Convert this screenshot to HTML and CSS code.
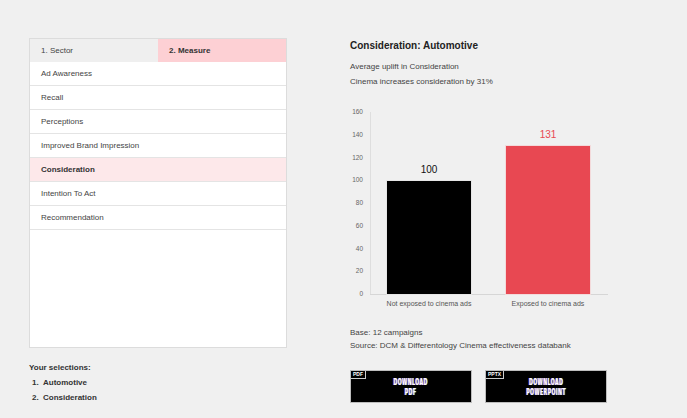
FILE: index.html
```html
<!DOCTYPE html>
<html>
<head>
  <meta charset="UTF-8">
  <title>Cinema effectiveness</title>
  <link rel="stylesheet" href="styles.css">
</head>
<body>
  <div class="page">
    <div class="left">
      <div class="panel">
        <div class="tabs">
          <div class="tab">1. Sector</div>
          <div class="tab active">2. Measure</div>
        </div>
        <div class="row">Ad Awareness</div>
        <div class="row">Recall</div>
        <div class="row">Perceptions</div>
        <div class="row">Improved Brand Impression</div>
        <div class="row selected">Consideration</div>
        <div class="row">Intention To Act</div>
        <div class="row">Recommendation</div>
      </div>

      <div class="selections">
        <div class="selections-title">Your selections:</div>
        <ol class="selections-list">
          <li>Automotive</li>
          <li>Consideration</li>
        </ol>
      </div>
    </div>

    <div class="right">
      <div class="chart-title">Consideration: Automotive</div>
      <p class="info">Average uplift in Consideration</p>
      <p class="info">Cinema increases consideration by 31%</p>

      <svg class="chart" width="270" height="212" viewBox="340 100 270 212">
        <line x1="370.5" y1="112" x2="370.5" y2="294" stroke="#dedede" />
        <line x1="370" y1="294.5" x2="608" y2="294.5" stroke="#d6d6d6" />
        <g class="tick" text-anchor="end">
          <text x="363" y="114">160</text>
          <text x="363" y="137">140</text>
          <text x="363" y="160">120</text>
          <text x="363" y="182">100</text>
          <text x="363" y="205">80</text>
          <text x="363" y="228">60</text>
          <text x="363" y="251">40</text>
          <text x="363" y="273">20</text>
          <text x="363" y="296">0</text>
        </g>
        <rect x="386.5" y="180.5" width="85" height="114" fill="#000" stroke="#e6e6e6" />
        <rect x="505.5" y="145.5" width="85" height="149" fill="#e84852" stroke="#f3dadb" />
        <text class="value" x="429" y="173" text-anchor="middle">100</text>
        <text class="value red" x="548" y="138" text-anchor="middle">131</text>
        <text class="cat" x="429" y="306" text-anchor="middle">Not exposed to cinema ads</text>
        <text class="cat" x="548" y="306" text-anchor="middle">Exposed to cinema ads</text>
      </svg>

      <p class="note first">Base: 12 campaigns</p>
      <p class="note">Source: DCM &amp; Differentology Cinema effectiveness databank</p>

      <div class="downloads">
        <a class="download" href="#">
          <span class="tag">PDF</span>
          <span class="label">DOWNLOAD<br>PDF</span>
        </a>
        <a class="download" href="#">
          <span class="tag">PPTX</span>
          <span class="label">DOWNLOAD<br>POWERPOINT</span>
        </a>
      </div>
    </div>
  </div>
</body>
</html>
```

FILE: styles.css
```css
body {
  margin: 0;
  font-family: "Liberation Sans", Arial, sans-serif;
  background-color: #f0f0f0;
  color: #333;
}

.page {
  display: flex;
  gap: 63px;
  padding: 38px 0 0 29px;
}

.left {
  width: 258px;
}

.panel {
  height: 310px;
  box-sizing: border-box;
  border: 1px solid #dcdcdc;
  background: white;
}

.tabs {
  display: flex;
  height: 23px;
}

.tab {
  flex: 1;
  padding-left: 11px;
  font-size: 8px;
  line-height: 23px;
  color: #444;
  background: #efefef;
}

.tab.active {
  background: #fdd0d4;
  font-weight: bold;
  color: #333;
}

.row {
  height: 23px;
  padding-left: 11px;
  font-size: 8px;
  line-height: 23px;
  color: #444;
  border-bottom: 1px solid #e4e4e4;
}

.row.selected {
  background: #fde8ea;
  font-weight: bold;
  color: #333;
}

.selections {
  margin-top: 13px;
  font-size: 8px;
  font-weight: bold;
  color: #333;
}

.selections-title {
  line-height: 14px;
}

.selections-list {
  margin: 0;
  padding-left: 12px;
}

.selections-list li {
  line-height: 15px;
  padding-left: 2px;
}

.right {
  width: 260px;
}

.chart-title {
  font-size: 10px;
  font-weight: bold;
  line-height: 16px;
  color: #222;
  margin-bottom: 5px;
}

.info {
  margin: 0;
  font-size: 8px;
  line-height: 15px;
  color: #444;
}

.chart {
  display: block;
  margin: 11px 0 0 -10px;
  font-family: "Liberation Sans", Arial, sans-serif;
}

.tick text {
  font-size: 6.5px;
  fill: #666;
}

.value {
  font-size: 10px;
  fill: #111;
}

.value.red {
  fill: #e84852;
}

.cat {
  font-size: 7px;
  fill: #555;
}

.note {
  margin: 0;
  font-size: 8px;
  line-height: 13px;
  color: #444;
}

.note.first {
  margin-top: 14px;
}

.downloads {
  display: flex;
  gap: 13px;
  margin-top: 18px;
}

.download {
  position: relative;
  width: 122px;
  height: 33px;
  box-sizing: border-box;
  border: 1px solid #bdbdbd;
  background: #000;
  display: flex;
  align-items: center;
  justify-content: center;
  text-decoration: none;
}

.tag {
  position: absolute;
  top: 0;
  left: 0;
  padding: 0 2px;
  font-size: 5px;
  line-height: 7px;
  font-weight: bold;
  color: white;
  border-right: 1px solid #ccc;
  border-bottom: 1px solid #ccc;
}

.label {
  display: inline-block;
  transform: scaleX(0.6);
  font-family: "DejaVu Sans Condensed", "Liberation Sans Narrow", "Liberation Sans", sans-serif;
  font-size: 8.5px;
  font-weight: bold;
  line-height: 9.5px;
  letter-spacing: 0.8px;
  text-align: center;
  color: white;
  text-shadow: -1px 0 #d060c0, 1px 0 #40c0d0;
  margin-top: 2px;
}
```
